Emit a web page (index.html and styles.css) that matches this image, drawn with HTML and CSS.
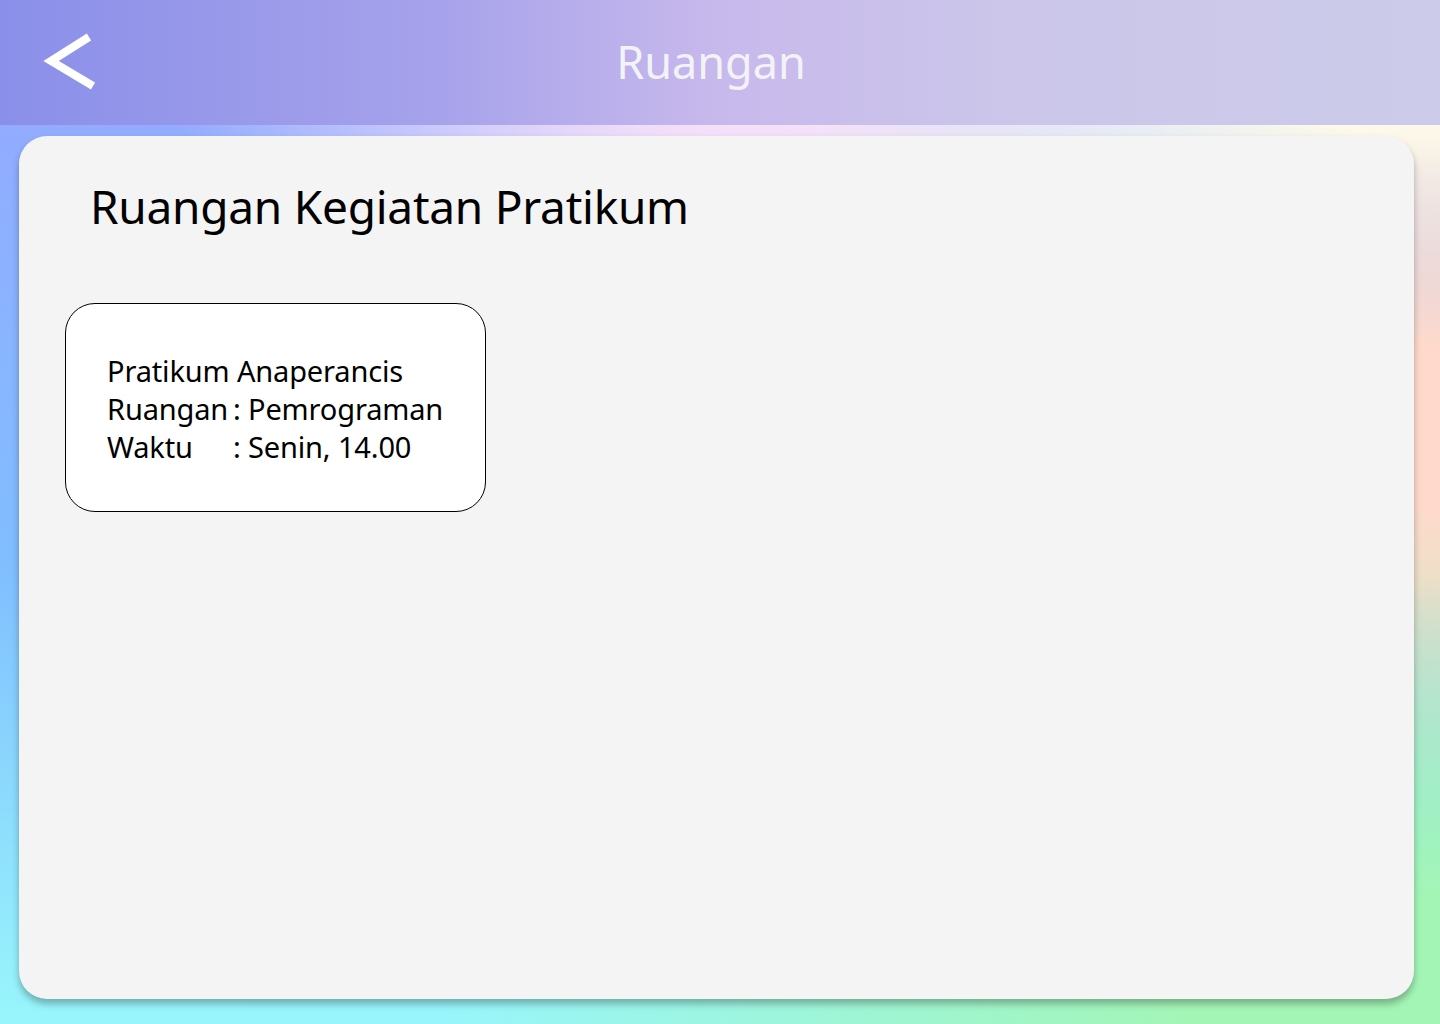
FILE: index.html
```html
<!DOCTYPE html>
<html lang="id">
<head>
<meta charset="utf-8">
<title>Ruangan</title>
<link rel="stylesheet" href="styles.css">
</head>
<body>
<div class="page">
  <header class="topbar">
    <button class="back" aria-label="Kembali">
      <svg width="56" height="58" viewBox="0 0 56 58">
        <path d="M46 4 L8 28 L50 53" fill="none" stroke="#ffffff" stroke-width="8" stroke-linejoin="miter" stroke-miterlimit="10"/>
      </svg>
    </button>
    <h1 class="topbar-title">Ruangan</h1>
  </header>
  <main class="panel">
    <h2 class="panel-title">Ruangan Kegiatan Pratikum</h2>
    <div class="room-card">
      <div class="room-line">Pratikum Anaperancis</div>
      <div class="room-line"><span class="label">Ruangan</span><span class="sep">:</span> Pemrograman</div>
      <div class="room-line"><span class="label label-waktu">Waktu</span><span class="sep">:</span> Senin, 14.00</div>
    </div>
  </main>
</div>
</body>
</html>
```
FILE: styles.css
```css
* { box-sizing: border-box; }
html, body { margin: 0; padding: 0; }
body {
  width: 1440px;
  height: 1024px;
  overflow: hidden;
  font-family: "Noto Sans", "Open Sans", sans-serif;
  background:
    radial-gradient(ellipse 1000px 520px at 100% 100%, #a3f5b6 0%, #a3f5b6 25%, rgba(163,245,182,0) 100%),
    radial-gradient(ellipse 600px 380px at 100% 45%, #ffdacc 0%, #ffdacc 30%, rgba(255,218,204,0) 100%),
    radial-gradient(ellipse 700px 400px at 100% 0%, #fbfff0 0%, #fbfff0 35%, rgba(251,255,240,0) 100%),
    radial-gradient(ellipse 600px 420px at 52% 0%, #fde4f8 0%, #fde4f8 25%, rgba(253,228,248,0) 100%),
    linear-gradient(180deg, #97a6ff 0%, #80beff 55%, #98f6fb 100%);
}
.page {
  display: flex;
  flex-direction: column;
  height: 1024px;
}
.topbar {
  height: 125px;
  flex: none;
  display: flex;
  align-items: center;
  position: relative;
  background: linear-gradient(90deg, #8a8fe9 0%, #a6a2eb 30%, #c8b9ec 50%, #cbc6ea 70%, #cccbe9 100%);
}
.back {
  border: 0;
  background: none;
  padding: 0;
  margin-left: 43px;
  margin-top: -2px;
  width: 56px;
  height: 58px;
  cursor: pointer;
  display: block;
}
.back svg { display: block; }
.topbar-title {
  position: absolute;
  left: 0;
  right: 0;
  top: 32px;
  margin: 0;
  text-align: center;
  font-weight: 400;
  font-size: 45px;
  line-height: 60px;
  letter-spacing: 0;
  color: #f3f3f6;
  transform: translateX(-9px);
}
.panel {
  margin: 11px 26px 25px 19px;
  flex: 1;
  background: #f4f4f4;
  border-radius: 28px;
  box-shadow: 0 5px 7px rgba(0,0,0,0.28);
  padding: 40px 0 0 46px;
}
.panel-title {
  margin: 0 0 67px 25px;
  font-weight: 400;
  font-size: 46px;
  line-height: 60px;
  color: #000;
  letter-spacing: -0.25px;
}
.room-card {
  width: 421px;
  height: 209px;
  background: #fff;
  border: 1px solid #000;
  border-radius: 30px;
  padding: 48px 0 0 41px;
}
.room-line {
  font-size: 29px;
  line-height: 38px;
  color: #000;
  white-space: nowrap;
  letter-spacing: -0.15px;
}
.label { display: inline-block; width: 126px; }
.sep { display: inline-block; }
```
